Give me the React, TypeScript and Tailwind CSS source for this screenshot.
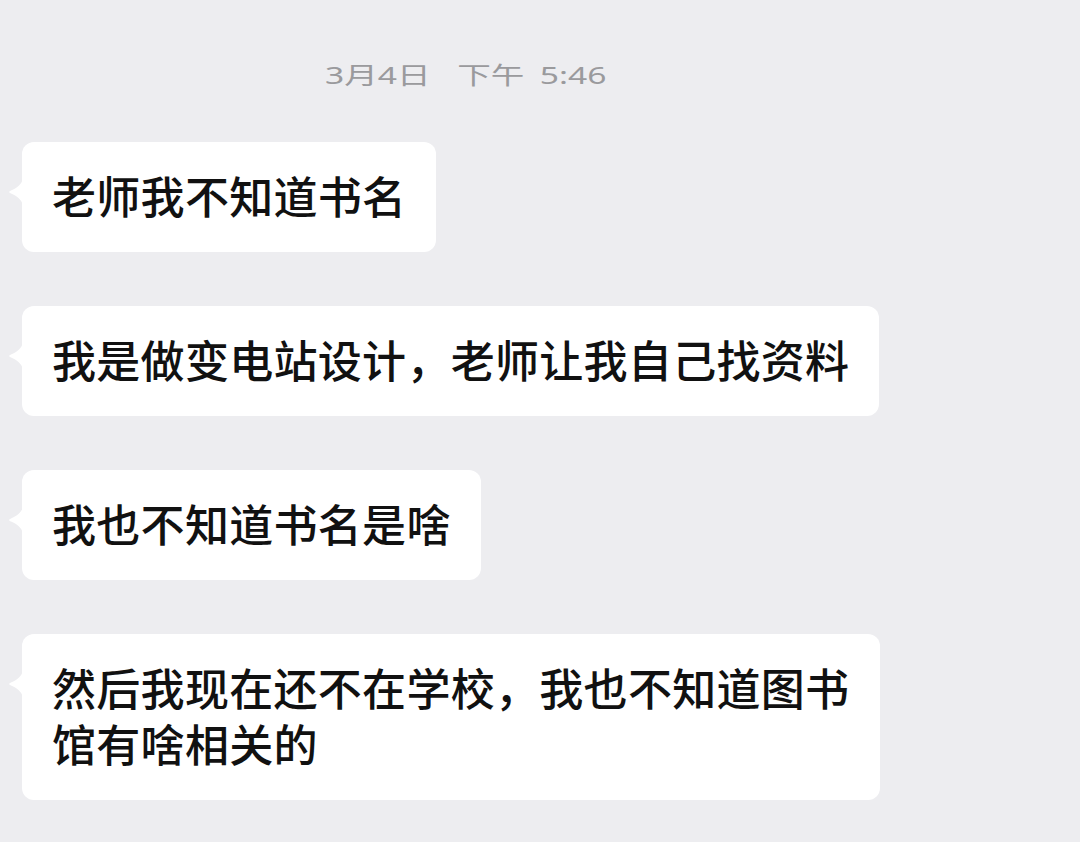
const messages = [
  "老师我不知道书名",
  "我是做变电站设计，老师让我自己找资料",
  "我也不知道书名是啥",
  "然后我现在还不在学校，我也不知道图书馆有啥相关的",
];

function Bubble({ text }: { text: string }) {
  return (
    <div className="relative self-start max-w-[858px] rounded-[12px] bg-white px-[30px] py-[27px] text-[44px] font-medium leading-[56px] tracking-[0.3px] text-[#111111]">
      <svg
        className="absolute left-[-14px] top-[37px]"
        width="15"
        height="26"
        viewBox="0 0 15 26"
      >
        <path d="M15 0 C13 6 9 9 3 11.5 C0.5 12.5 0.5 13.5 3 14.5 C9 17 13 20 15 26 Z" fill="#ffffff" />
      </svg>
      {text}
    </div>
  );
}

export default function App() {
  return (
    <div
      className="min-h-[842px] w-[1080px] overflow-hidden bg-[#ededf0] pl-[22px] pt-[55px]"
      style={{ fontFamily: '"Noto Sans", "Noto Sans CJK SC", sans-serif' }}
    >
      <div className="h-[40px] pl-[303px]">
        <span className="inline-flex origin-left scale-x-140 whitespace-nowrap text-[24px] leading-[40px] text-[#9a9a9d]">
          <span>3月4日</span>
          <span className="ml-[19px]">下午</span>
          <span className="ml-[11px]">5:46</span>
        </span>
      </div>
      <div className="mt-[47px] flex flex-col gap-[54px]">
        {messages.map((m) => (
          <Bubble key={m} text={m} />
        ))}
      </div>
    </div>
  );
}
